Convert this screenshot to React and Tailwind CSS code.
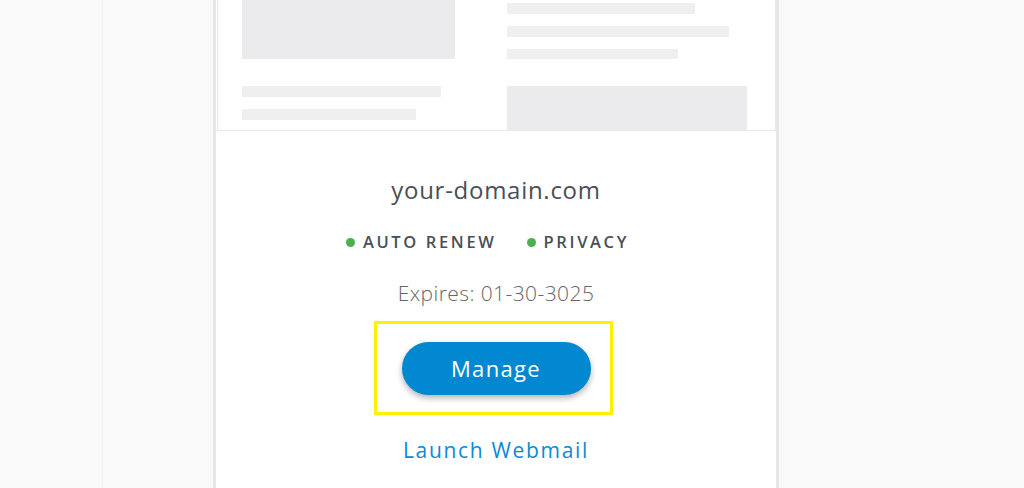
import React from "react";

const font = { fontFamily: "'Open Sans', 'DejaVu Sans', sans-serif" };

const Bar = ({ w, h = "h-[11px]", className = "" }) => (
  <div className={`${w} ${h} bg-[#efeff0] ${className}`} />
);

const StatusTag = ({ label }) => (
  <div className="flex items-center gap-2">
    <span className="w-[9px] h-[9px] rounded-full bg-[#4caf50]" />
    <span className="text-[16.5px] font-semibold tracking-[0.16em] text-[#4a4f54]">{label}</span>
  </div>
);

export default function App() {
  return (
    <div className="w-[1024px] h-[488px] overflow-hidden bg-[#f9f9f9] flex" style={font}>
      <div className="w-[103px] shrink-0 border-r border-[#f1f1f1]" />
      <div className="w-[110px] shrink-0" />
      <div className="w-[566px] shrink-0 h-full bg-white border-x-[3px] border-[#e6e6e6] flex flex-col items-center">
        <div className="self-stretch ml-px h-[131px] border-l border-r border-b border-[#e8e8e8] flex gap-[52px] pl-[24px] pr-[26px] overflow-hidden">
          <div className="w-[213px] flex flex-col">
            <div className="h-[59px] bg-[#ebebed]" />
            <Bar w="w-[199px]" className="mt-[27px]" />
            <Bar w="w-[174px]" className="mt-[12px]" />
          </div>
          <div className="w-[240px] flex flex-col pt-[3px]">
            <Bar w="w-[188px]" />
            <Bar w="w-[222px]" className="mt-[12px]" />
            <Bar w="w-[171px]" h="h-[10px]" className="mt-[12px]" />
            <div className="mt-[27px] flex-1 bg-[#ebebed]" />
          </div>
        </div>

        <div className="mt-[44px] h-[30px] flex items-center text-[24px] tracking-[0.03em] text-[#4a4f54]">your-domain.com</div>

        <div className="mt-[27px] h-[20px] flex items-center gap-[30px] pr-[17px]">
          <StatusTag label="AUTO RENEW" />
          <StatusTag label="PRIVACY" />
        </div>

        <div className="mt-[30px] h-[24px] flex items-center text-[21px] font-light tracking-[0.02em] text-[#666666]">Expires: 01-30-3025</div>

        <div className="mt-[15px] mr-[5px] w-[239px] h-[94px] border-[3px] border-[#fff000] flex items-center justify-center pl-[5px]">
          <button className="w-[189px] h-[53px] rounded-full bg-[#0288d1] text-white text-[22px] font-medium tracking-[0.06em] shadow-[0_3px_6px_rgba(0,0,0,0.3)]">
            Manage
          </button>
        </div>

        <a className="mt-[24px] h-[24px] flex items-center text-[21px] font-medium tracking-[0.08em] text-[#0a8ad6]">Launch Webmail</a>
      </div>
    </div>
  );
}
